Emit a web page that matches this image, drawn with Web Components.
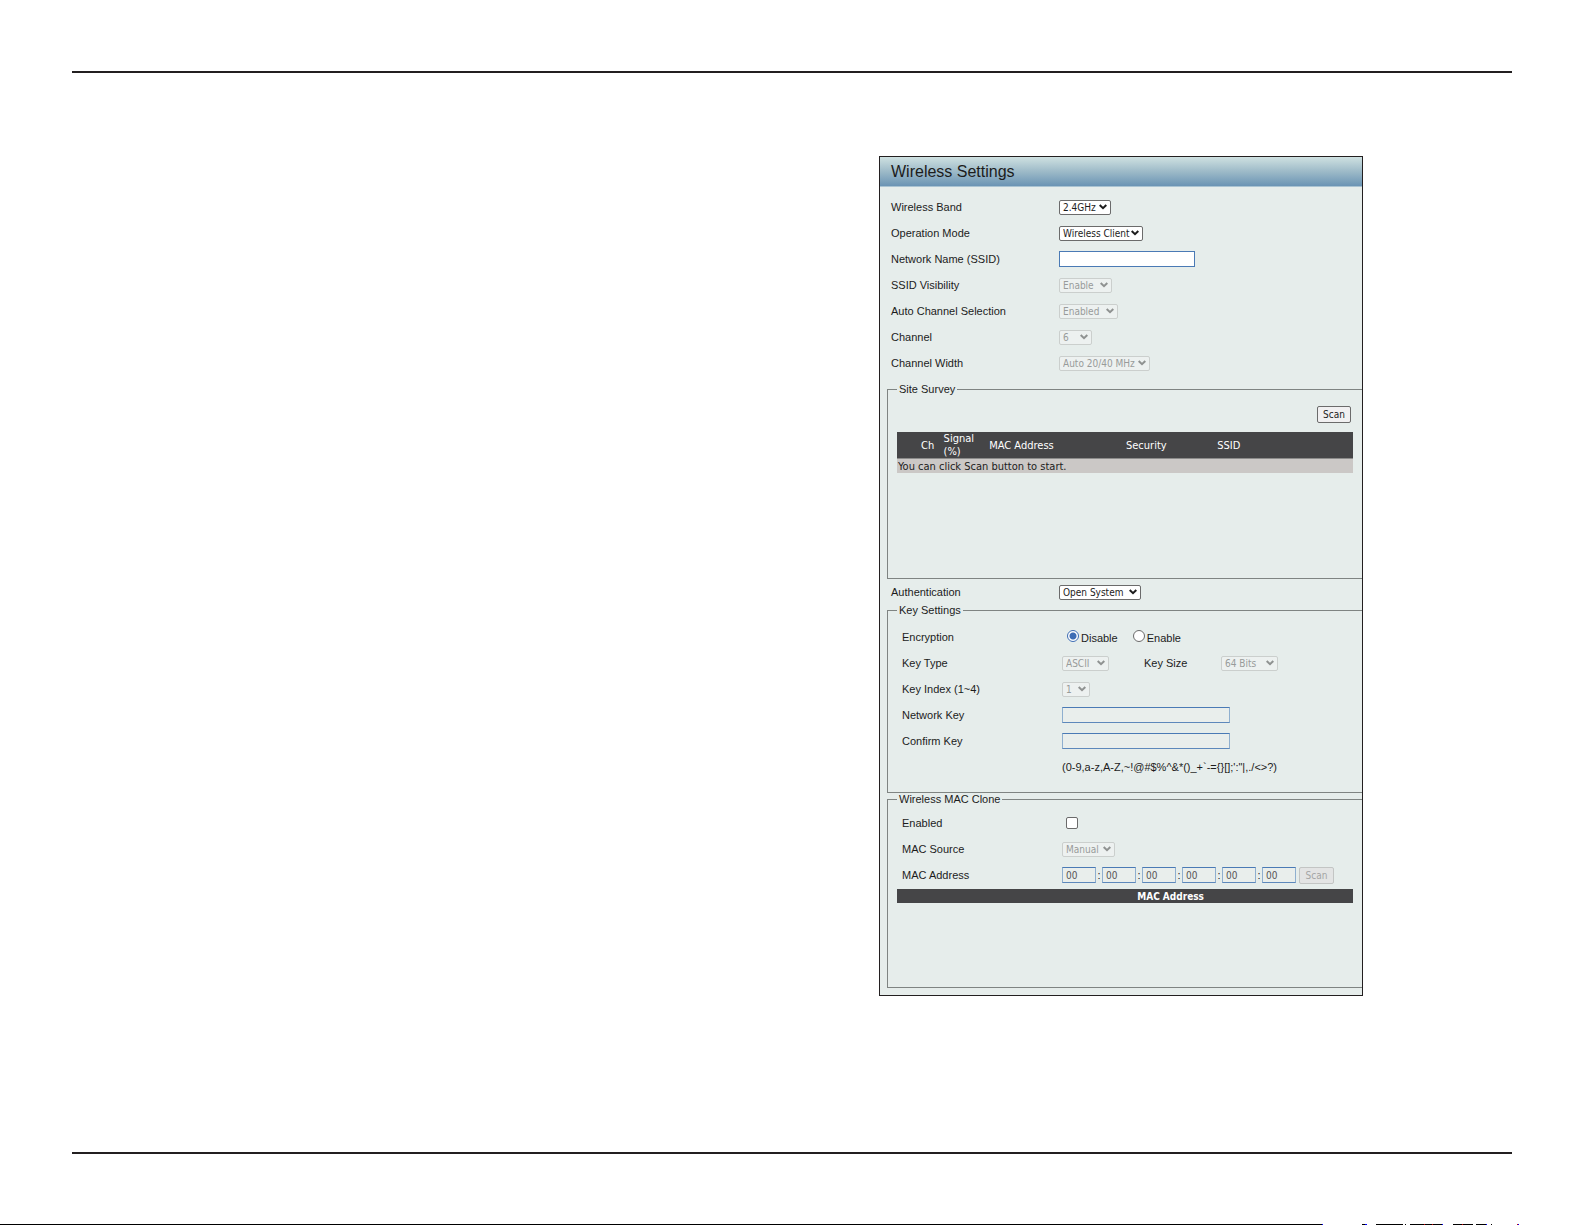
<!DOCTYPE html>
<html lang="en">
<head>
<meta charset="utf-8">
<title>Wireless Settings</title>
<style>
    body {
        margin: 0;
        background: white;
        color: #1c1c1c;
        font: 11px/13px "Liberation Sans", Arial, sans-serif;
        --ui-font: "DejaVu Sans Condensed", Tahoma, sans-serif;
        --label-width: 168px;
    }
</style>
</head>
<body>
<doc-page>
    <settings-panel heading="Wireless Settings">
        <select-field label="Wireless Band" options="2.4GHz" width="52"></select-field>
        <select-field label="Operation Mode" options="Wireless Client" width="84"></select-field>
        <text-field label="Network Name (SSID)" width="136"></text-field>
        <select-field label="SSID Visibility" options="Enable" width="53" disabled></select-field>
        <select-field label="Auto Channel Selection" options="Enabled" width="59" disabled></select-field>
        <select-field label="Channel" options="6" width="33" disabled></select-field>
        <select-field label="Channel Width" options="Auto 20/40 MHz" width="91" disabled></select-field>
        <settings-group legend="Site Survey" class="survey">
            <site-survey></site-survey>
        </settings-group>
        <select-field label="Authentication" options="Open System" width="82"></select-field>
        <settings-group legend="Key Settings" class="keys">
            <radio-field label="Encryption" options="Disable,Enable"></radio-field>
            <select-field label="Key Type" options="ASCII" width="47" disabled>
                <select-field class="inner" label="Key Size" options="64 Bits" width="57" disabled></select-field>
            </select-field>
            <select-field label="Key Index (1~4)" options="1" width="28" disabled></select-field>
            <text-field label="Network Key" width="168" disabled></text-field>
            <text-field label="Confirm Key" width="168" disabled></text-field>
            <note-row>(0-9,a-z,A-Z,~!@#$%^&amp;*()_+`-={}[];':"|,./&lt;&gt;?)</note-row>
        </settings-group>
        <settings-group legend="Wireless MAC Clone" class="clone">
            <check-field label="Enabled"></check-field>
            <select-field label="MAC Source" options="Manual" width="53" disabled></select-field>
            <mac-field label="MAC Address"></mac-field>
            <mac-list></mac-list>
        </settings-group>
    </settings-panel>
</doc-page>

<script>
// ### The page with its two rules ###
class DocPage extends HTMLElement {
    constructor() {
        super();
        this.attachShadow({ mode: 'open' });
    }

    connectedCallback() {
        this.shadowRoot.innerHTML = `
            <style>
                :host {
                    display: flex;
                    flex-direction: column;
                    box-sizing: border-box;
                    min-height: 100vh;
                    padding-top: 71px;
                }
                main {
                    flex: 1;
                    display: grid;
                    grid-template-columns: 807fr 484fr 149fr;
                    align-items: start;
                    margin: 0 73px 0 72px;
                    padding: 83px 0;
                    border: solid #231f20;
                    border-width: 2px 0;
                }
                ::slotted(*) { grid-column: 2; }
                .edge {
                    display: block;
                    width: 100%;
                    height: 1px;
                    margin-top: 70px;
                }
            </style>
            <main><slot></slot></main>
            <svg class="edge" viewBox="0 0 1585 1" preserveAspectRatio="none" shape-rendering="crispEdges" aria-hidden="true">
                <path d="M0 0h1322v1H0zM1362 0h3v1h-3zM1376 0h27v1h-27zM1405 0h1v1h-1zM1410 0h32v1h-32zM1453 0h20v1h-20zM1476 0h10v1h-10zM1491 0h1v1h-1z"/>
                <path fill="#00f" d="M1322 0h1v1h-1zM1365 0h2v1h-2zM1442 0h1v1h-1zM1486 0h1v1h-1zM1518 0h1v1h-1z"/>
                <path fill="#c00" d="M1424 0h1v1h-1zM1432 0h1v1h-1zM1462 0h1v1h-1zM1517 0h1v1h-1z"/>
            </svg>
        `;
    }
}

// ### The framed panel ###
class SettingsPanel extends HTMLElement {
    constructor() {
        super();
        this.attachShadow({ mode: 'open' });
    }

    connectedCallback() {
        this.shadowRoot.innerHTML = `
            <style>
                :host {
                    display: block;
                    border: 1px solid #231f20;
                    background: #e6edeb;
                }
                h1 {
                    margin: 0;
                    padding: 1px 0 0 11px;
                    border-bottom: 1px solid #a9c3d2;
                    background: linear-gradient(#cfe1e1, #9dbac8 50%, #6a94b4);
                    font-size: 16px;
                    font-weight: normal;
                    line-height: 28px;
                }
                .body { padding: 7px 0; }
                ::slotted(select-field), ::slotted(text-field) { padding-left: 11px; }
                ::slotted(settings-group) { margin-left: 7px; }
                ::slotted(.survey) {
                    --group-padding: 12px;
                    margin-top: 8px;
                }
                ::slotted(.clone) {
                    --group-padding: 6px;
                    margin-top: 1px;
                }
            </style>
            <h1>${this.getAttribute('heading')}</h1>
            <div class="body"><slot></slot></div>
        `;
    }
}

// ### A fieldset, open on its right side ###
class SettingsGroup extends HTMLElement {
    constructor() {
        super();
        this.attachShadow({ mode: 'open' });
    }

    connectedCallback() {
        this.shadowRoot.innerHTML = `
            <style>
                :host {
                    display: block;
                    --label-width: 160px;
                }
                fieldset {
                    min-width: 0;
                    margin: 0;
                    padding: var(--group-padding, 9px) 0 0;
                    border: 1px solid #7f8482;
                    border-right: 0;
                }
                :host(.keys) fieldset { padding-bottom: 12px; }
                legend {
                    margin-left: 9px;
                    padding: 0 2px;
                    line-height: 10px;
                }
                ::slotted(:not(site-survey, mac-list)) { padding-left: 14px; }
            </style>
            <fieldset>
                <legend>${this.getAttribute('legend')}</legend>
                <slot></slot>
            </fieldset>
        `;
    }
}

// Base of all the rows: a label column, then the control.
class FieldRow extends HTMLElement {
    constructor() {
        super();
        this.attachShadow({ mode: 'open' });
    }

    get label() {
        return this.getAttribute('label');
    }

    get state() {
        return this.hasAttribute('disabled') ? 'disabled' : '';
    }

    get width() {
        return this.getAttribute('width');
    }

    connectedCallback() {
        this.shadowRoot.innerHTML = `
            <style>
                :host {
                    display: flex;
                    align-items: center;
                    height: 26px;
                }
                .label { flex: 0 0 var(--label-width); }
                input, select, button {
                    box-sizing: border-box;
                    margin: 0;
                    font: 10px/13px var(--ui-font);
                    color: #1c1c1c;
                }
                input:not([type]) {
                    height: 16px;
                    padding: 0 3px;
                    border: 1px solid #4a7ab5;
                    background: white;
                }
                input:not([type]):disabled {
                    border-color: #4a7ab5 #8fafcf #5d88bb #8fafcf;
                    background: #e9eeec;
                    color: #555;
                }
                ${this.styles()}
            </style>
            ${this.control()}
        `;
    }

    styles() {
        return '';
    }
}

class SelectField extends FieldRow {
    styles() {
        return `
            :host(.inner) {
                --label-width: 77px;
                margin-left: 35px;
            }
            .box { position: relative; }
            select {
                display: block;
                width: ${this.width}px;
                height: 15px;
                padding: 0 0 0 3px;
                appearance: none;
                border: 1px solid #6b6b6b;
                border-radius: 2px;
                background: white;
                color: #1c1c1c;
            }
            select:disabled {
                border-color: #cbcfcd;
                background: #edf1f0;
                color: #989b9a;
                opacity: 1;
            }
            svg {
                position: absolute;
                top: 4px;
                right: 4px;
                pointer-events: none;
                stroke: #1c1c1c;
            }
            select:disabled + svg { stroke: #8f9291; }
        `;
    }

    control() {
        const options = this.getAttribute('options').split(',');
        return `
            <label class="label" for="control">${this.label}</label>
            <div class="box">
                <select id="control" ${this.state}>${options.map((o) => `<option>${o}</option>`).join('')}</select>
                <svg width="8" height="6" fill="none" stroke-width="2" aria-hidden="true"><path d="M.7 1L4 4.2 7.3 1"/></svg>
            </div>
            <slot></slot>
        `;
    }
}

class TextField extends FieldRow {
    styles() {
        return `input { width: ${this.width}px; }`;
    }

    control() {
        return `
            <label class="label" for="control">${this.label}</label>
            <input id="control" ${this.state}>
        `;
    }
}

class RadioField extends FieldRow {
    styles() {
        return `
            .choice {
                display: flex;
                gap: 2px;
                margin: 1px 15px 0 5px;
            }
            .choice + .choice { margin-left: 0; }
            .choice label { padding-top: 2px; }
            input {
                width: 12px;
                height: 12px;
                appearance: none;
                border: 1px solid #6b6b6b;
                border-radius: 50%;
                background: white;
            }
            input:checked {
                border-color: #3e6db5;
                background: radial-gradient(#3e6db5 3px, white 4px);
            }
        `;
    }

    control() {
        const options = this.getAttribute('options').split(',');
        return `
            <span class="label">${this.label}</span>
            ${options.map((o, i) => `
                <div class="choice">
                    <input type="radio" name="choice" id="choice${i}" ${i === 0 ? 'checked' : ''}>
                    <label for="choice${i}">${o}</label>
                </div>
            `).join('')}
        `;
    }
}

class CheckField extends FieldRow {
    styles() {
        return `
            input {
                width: 12px;
                height: 12px;
                margin-left: 4px;
                appearance: none;
                border: 1px solid #6b6b6b;
                border-radius: 2px;
                background: white;
            }
        `;
    }

    control() {
        return `
            <label class="label" for="control">${this.label}</label>
            <input type="checkbox" id="control">
        `;
    }
}

// Six octets and a scan button.
class MacField extends FieldRow {
    styles() {
        return `
            input { width: 34px; }
            .colon {
                width: 6px;
                text-align: center;
            }
            button {
                width: 35px;
                height: 17px;
                margin-left: 3px;
                padding: 0;
                border: 1px solid #c3c5c4;
                border-radius: 2px;
                background: #e3e4e4;
                color: #a3a5a4;
            }
        `;
    }

    control() {
        const octets = [1, 2, 3, 4, 5, 6].map((n) => {
            const id = n === 1 ? 'id="control"' : `aria-label="Octet ${n}"`;
            return `<input ${id} value="00" maxlength="2" disabled>`;
        });
        return `
            <label class="label" for="control">${this.label}</label>
            ${octets.join('<span class="colon">:</span>')}
            <button type="button" disabled>Scan</button>
        `;
    }
}

class NoteRow extends FieldRow {
    control() {
        return '<span class="label"></span><span><slot></slot></span>';
    }
}

// ### Scan button and list of found networks ###
class SiteSurvey extends HTMLElement {
    constructor() {
        super();
        this.attachShadow({ mode: 'open' });
    }

    connectedCallback() {
        this.shadowRoot.innerHTML = `
            <style>
                :host {
                    display: flex;
                    flex-direction: column;
                    gap: 9px;
                    min-height: 172px;
                    margin: 0 9px;
                }
                button {
                    align-self: flex-end;
                    width: 34px;
                    height: 17px;
                    margin-right: 2px;
                    padding: 0;
                    border: 1px solid #6b6b6b;
                    border-radius: 2px;
                    background: #f1f0f1;
                    color: #1c1c1c;
                    font: 10px/13px var(--ui-font);
                }
                table {
                    width: 100%;
                    border-collapse: collapse;
                    table-layout: fixed;
                    font: 11px/13px var(--ui-font);
                }
                th, td {
                    padding: 0 0 0 1px;
                    text-align: left;
                }
                th {
                    background: #454547;
                    color: white;
                    font-weight: normal;
                }
                th:first-child { padding-left: 24px; }
                tbody { border-top: 1px solid #8b8b8a; }
                td {
                    height: 14px;
                    background: #cbc8c6;
                }
            </style>
            <button type="button">Scan</button>
            <table>
                <colgroup>
                    <col style="width: 10%"><col style="width: 10%"><col style="width: 30%"><col style="width: 20%"><col>
                </colgroup>
                <thead>
                    <tr><th>Ch</th><th>Signal<br>(%)</th><th>MAC Address</th><th>Security</th><th>SSID</th></tr>
                </thead>
                <tbody>
                    <tr><td colspan="5">You can click Scan button to start.</td></tr>
                </tbody>
            </table>
        `;
    }
}

class MacList extends HTMLElement {
    constructor() {
        super();
        this.attachShadow({ mode: 'open' });
    }

    connectedCallback() {
        this.shadowRoot.innerHTML = `
            <style>
                :host {
                    display: block;
                    min-height: 98px;
                    margin: 1px 9px 0;
                }
                table {
                    width: 100%;
                    border-collapse: collapse;
                }
                th {
                    height: 14px;
                    padding: 0 0 0 20%;
                    background: #454547;
                    color: white;
                    font: bold 10px/13px var(--ui-font);
                }
            </style>
            <table>
                <thead><tr><th>MAC Address</th></tr></thead>
            </table>
        `;
    }
}

customElements.define('doc-page', DocPage);
customElements.define('settings-panel', SettingsPanel);
customElements.define('settings-group', SettingsGroup);
customElements.define('select-field', SelectField);
customElements.define('text-field', TextField);
customElements.define('radio-field', RadioField);
customElements.define('check-field', CheckField);
customElements.define('mac-field', MacField);
customElements.define('note-row', NoteRow);
customElements.define('site-survey', SiteSurvey);
customElements.define('mac-list', MacList);
</script>
</body>
</html>
